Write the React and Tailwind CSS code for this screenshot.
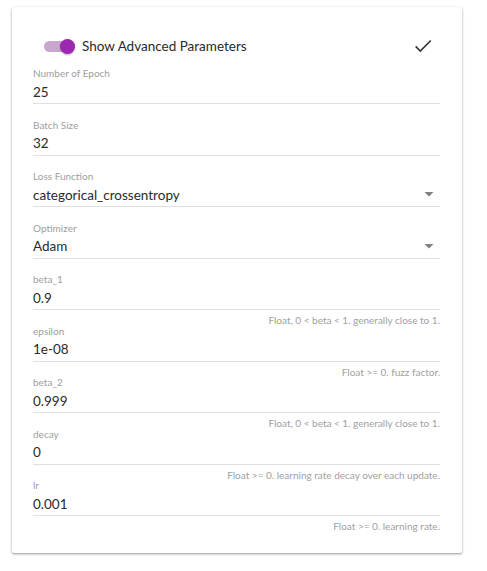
const fields = [
  { label: "Number of Epoch", value: "25" },
  { label: "Batch Size", value: "32" },
  { label: "Loss Function", value: "categorical_crossentropy", select: true },
  { label: "Optimizer", value: "Adam", select: true },
  { label: "beta_1", value: "0.9", help: "Float, 0 < beta < 1. generally close to 1." },
  { label: "epsilon", value: "1e-08", help: "Float >= 0. fuzz factor." },
  { label: "beta_2", value: "0.999", help: "Float, 0 < beta < 1. generally close to 1." },
  { label: "decay", value: "0", help: "Float >= 0. learning rate decay over each update." },
  { label: "lr", value: "0.001", help: "Float >= 0. learning rate." },
];

// every row takes the same height; the hint sits in the gap under the line
function Field({ label, value, select, help }) {
  return (
    <div className="h-[51.5px]">
      <div className="h-[14px] text-[10px] leading-[14px] text-[#9e9e9e]">{label}</div>
      <div className="flex h-[24px] items-center justify-between border-b border-[#e0e0e0] text-[13.5px] leading-[20px] text-[#2a2a2a]">
        <span>{value}</span>
        {select && (
          <svg width="10" height="5" viewBox="0 0 10 5" className="mr-[6px]">
            <path d="M0.5 0 L9.5 0 L5 4.5 Z" fill="#808080" />
          </svg>
        )}
      </div>
      {help && (
        <div className="mt-[5px] h-[10px] text-right text-[10px] leading-[10px] text-[#a0a0a0]">{help}</div>
      )}
    </div>
  );
}

export default function App() {
  return (
    <div className="min-h-[571px] bg-white pt-[7px] pl-[12px]" style={{ fontFamily: "Lato, sans-serif" }}>
      <div className="h-[546px] w-[450px] rounded-[2px] bg-white pl-[21px] pr-[22px] pt-[28px] shadow-[0_1px_3px_rgba(0,0,0,0.25),0_1px_2px_rgba(0,0,0,0.2)]">
        <div className="mb-[9px] flex h-[22px] items-center justify-between">
          <div className="flex items-center">
            <div className="relative ml-[11px] h-[11px] w-[28px] rounded-full bg-[#c9a6cf]">
              <div className="absolute right-[-3px] top-[-2px] h-[15px] w-[15px] rounded-full bg-[#9c27b0] shadow-[0_1px_2px_rgba(0,0,0,0.3)]" />
            </div>
            <span className="ml-[10px] text-[13.5px] text-[#2a2a2a]">Show Advanced Parameters</span>
          </div>
          <svg width="22" height="22" viewBox="0 0 24 24" className="mr-[6px]">
            <path d="M4 12.5 L9 17.5 L20.5 6" fill="none" stroke="#333" strokeWidth="1.8" />
          </svg>
        </div>
        {fields.map((f) => (
          <Field key={f.label} {...f} />
        ))}
      </div>
    </div>
  );
}
